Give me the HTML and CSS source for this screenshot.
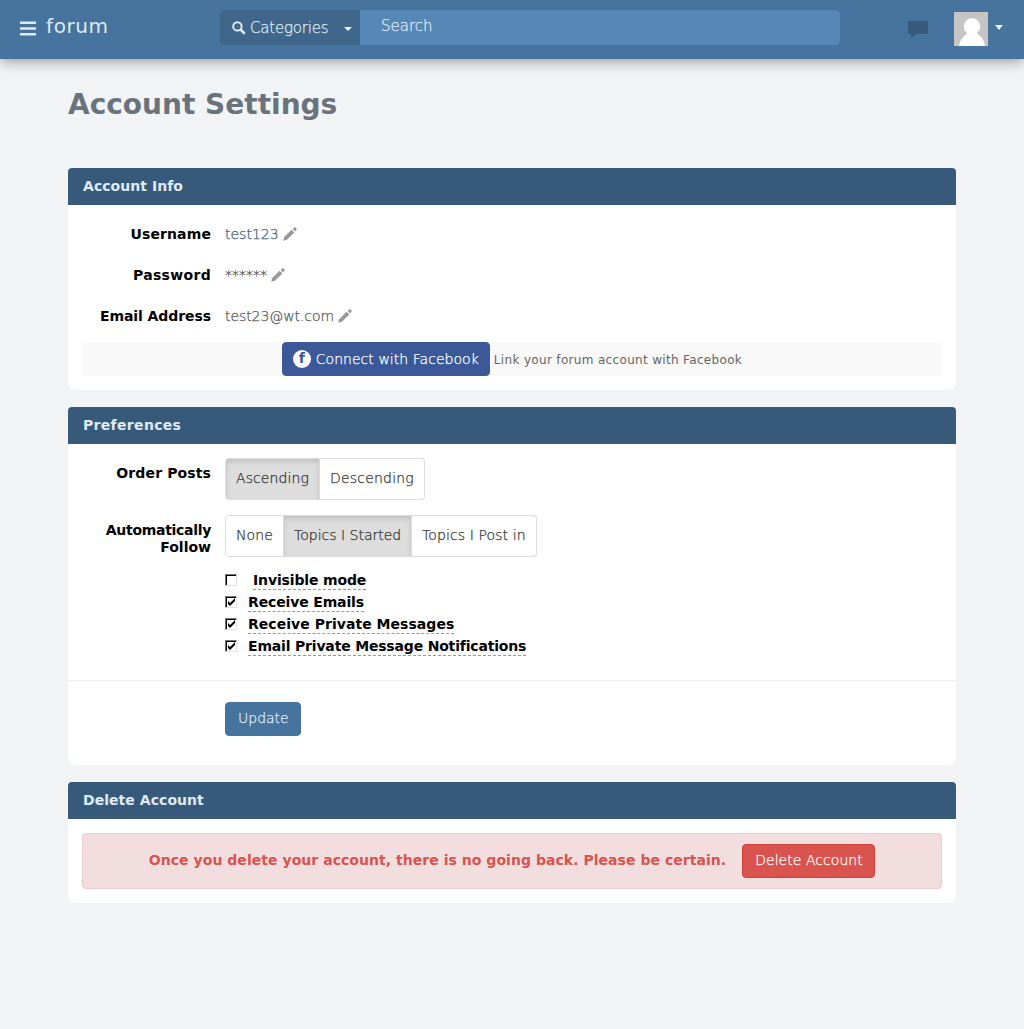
FILE: index.html
```html
<!DOCTYPE html>
<html lang="en">
<head>
<meta charset="utf-8">
<title>Account Settings</title>
<link rel="stylesheet" href="styles.css">
</head>
<body>
<svg class="defs" width="0" height="0">
  <symbol id="pencil" viewBox="0 0 14 14"><path d="M0.3 13.7 L1.2 10.1 L8.6 2.7 L11.4 5.4 L3.9 12.800 Z M9.6 1.900 L11.2 0.500 Q12 0 12.7 0.600 L13.5 1.400 Q14 2.1 13.5 2.800 L12.2 4.500 Z"/></symbol>
</svg>
<header class="navbar">
  <a class="brand">
    <svg class="menu-icon" width="17" height="15" viewBox="0 0 17 15"><path d="M0 0.5h16v2.6H0zM0 6.2h16v2.6H0zM0 11.9h16v2.6H0z"/></svg>
    <span>forum</span>
  </a>
  <form class="search">
    <div class="categories">
      <svg class="glass" width="14" height="14" viewBox="0 0 14 14"><circle cx="5.4" cy="5.4" r="4.2" fill="none" stroke-width="2"/><path d="M8.7 8.7 L12 12" stroke-width="2.6" stroke-linecap="round"/></svg>
      <span class="categories-text">Categories</span>
      <i class="caret"></i>
    </div>
    <div class="search-field">Search</div>
  </form>
  <div class="user">
    <svg class="chat" width="20" height="18" viewBox="0 0 20 18"><path d="M1 0h18q1 0 1 1v11q0 1-1 1H8L3.200 17.800V13H1q-1 0-1-1V1q0-1 1-1z"/></svg>
    <svg class="avatar" width="34" height="34" viewBox="0 0 34 34"><path fill="#c5c5c5" d="M0 0h34v34H0z"/><circle cx="18" cy="14.500" r="8.300" fill="#fff"/><path fill="#fff" d="M5 34C6 27 10.500 23 14 21h8c4 2 8 6 9 13z"/></svg>
    <i class="caret caret-large"></i>
  </div>
</header>
<main class="page">
  <h1>Account Settings</h1>
  <section class="panel">
    <h2>Account Info</h2>
    <div class="panel-body info">
      <div class="info-row"><b class="label">Username</b><span class="value link">test123</span><svg class="pencil"><use href="#pencil"/></svg></div>
      <div class="info-row"><b class="label open">Password</b><span class="value">******</span><svg class="pencil"><use href="#pencil"/></svg></div>
      <div class="info-row"><b class="label tight">Email Address</b><span class="value email">test23@wt.com</span><svg class="pencil"><use href="#pencil"/></svg></div>
      <div class="facebook">
        <button class="btn btn-facebook"><span class="fb-icon">f</span><span>Connect with Facebook</span></button>
        <small>Link your forum account with Facebook</small>
      </div>
    </div>
  </section>
  <section class="panel">
    <h2 class="open">Preferences</h2>
    <div class="preferences">
      <div class="pref-row">
        <b class="label">Order Posts</b>
        <div class="group"><span class="on w-asc">Ascending</span><span class="w-desc">Descending</span></div>
      </div>
      <div class="pref-row">
        <b class="label tighter">Automatically <span class="open">Follow</span></b>
        <div class="group"><span class="w-none">None</span><span class="on w-started">Topics I Started</span><span class="w-post">Topics I Post in</span></div>
      </div>
      <div class="checks">
        <div class="check"><i class="box"></i><b class="spaced">Invisible mode</b></div>
        <div class="check"><i class="box"><svg viewBox="0 0 9 9"><path d="M1 3v3l2 2 5-5V0L3 5z"/></svg></i><b>Receive Emails</b></div>
        <div class="check"><i class="box"><svg viewBox="0 0 9 9"><path d="M1 3v3l2 2 5-5V0L3 5z"/></svg></i><b class="messages">Receive Private Messages</b></div>
        <div class="check"><i class="box"><svg viewBox="0 0 9 9"><path d="M1 3v3l2 2 5-5V0L3 5z"/></svg></i><b class="notifications">Email Private Message Notifications</b></div>
      </div>
    </div>
    <div class="panel-footer"><button class="btn btn-update">Update</button></div>
  </section>
  <section class="panel">
    <h2>Delete Account</h2>
    <div class="panel-body">
      <div class="alert"><b>Once you delete your account, there is no going back. Please be certain.</b><button class="btn btn-danger">Delete Account</button></div>
    </div>
  </section>
</main>
</body>
</html>
```
FILE: styles.css
```css
* { box-sizing: border-box; }
body {
  margin: 0;
  background: #f1f3f5;
  font-family: "DejaVu Sans", sans-serif;
  font-size: 14px;
  font-weight: 200;
  line-height: 20px;
  color: #555;
}
.defs { display: block; }
.navbar {
  display: flex;
  height: 59px;
  background: #46749e;
  box-shadow: 0 0 15px rgba(0, 0, 0, 0.5);
  color: #dfeaf4;
}
.brand { display: flex; width: 220px; padding: 11px 0 0 20px; font-size: 20px; font-weight: 400; line-height: 30px; letter-spacing: 0.6px; }
.menu-icon { margin: 10px 9px 0 0; fill: #dfeaf4; }
.search { display: flex; width: 620px; height: 35px; margin-top: 10px; border-radius: 5px; overflow: hidden; font-size: 15px; }
.search, .value, .btn, .group { -webkit-text-stroke: 0.25px currentColor; }
.categories { display: flex; align-items: center; width: 140px; padding: 1px 8px 0 12px; background: #40668b; }
.categories-text { letter-spacing: -0.2px; }
.glass { margin-right: 4px; stroke: #dfeaf4; }
.caret { margin: 2px 0 0 auto; border: 4px solid transparent; border-top-color: #eef5fb; border-bottom: 0; }
.search-field { flex: 1; padding: 6px 21px; background: #5687b6; }
.user { display: flex; flex: 1; padding: 12px 20px 0 68px; }
.chat { margin: 9px 26px 0 0; fill: #375a7b; }
.caret-large { margin: 13px 0 0 7px; height: 5px; border-width: 5px 4.500px 0; }
.page { width: 888px; margin: 0 auto; }
h1 { margin: 0; padding: 26px 0 44px; font-size: 28px; line-height: 39px; font-weight: 700; color: #6a727c; }
.panel { margin-bottom: 17px; background: #fff; border-radius: 4px 4px 8px 8px; }
h2 { height: 37px; margin: 0; padding: 0 15px; border-radius: 4px 4px 0 0; background: #375a7b; color: #dfeaf4; font-size: 14px; line-height: 37px; font-weight: 700; letter-spacing: 0.05px; }
.panel-body { padding: 14px; }
.info-row { display: flex; height: 41px; padding-top: 5px; }
.label { width: 129px; margin-right: 14px; text-align: right; color: #000; font-weight: 700; letter-spacing: 0.12px; }
.open { letter-spacing: 0.32px; }
.tight { letter-spacing: -0.08px; }
.tighter { letter-spacing: -0.3px; }
.tighter .open { letter-spacing: 0; }
.link { color: #375a7b; }
.email { letter-spacing: -0.08px; }
.pencil { width: 14px; height: 14px; margin: 3px 0 0 4px; fill: #999; }
.facebook { display: flex; justify-content: center; align-items: center; height: 34px; background: #f9f9f9; }
.btn { height: 34px; padding: 0 12px; border: 1px solid; border-radius: 4px; font: inherit; color: #fff; white-space: nowrap; }
.btn-facebook { display: flex; align-items: center; width: 208px; margin-right: 4px; padding: 0 10px; background: #3b5998; border-color: #3b5998; letter-spacing: 0.04px; }
.fb-icon { width: 18px; height: 18px; margin-right: 5px; border-radius: 50%; background: #fff; color: #3b5998; font-weight: 700; line-height: 16px; -webkit-text-stroke: 0; }
small { padding-top: 1px; font-size: 12px; font-weight: 400; color: #666; letter-spacing: 0.33px; }
.preferences { display: grid; gap: 15px; padding: 14px 14px 23px; }
.pref-row { display: flex; height: 42px; }
.preferences .label { padding-top: 7px; line-height: 17px; }
.group { display: flex; }
.group span { padding: 0 0 0 10px; border: 1px solid #ddd; border-left-width: 0; line-height: 39px; color: #333; white-space: nowrap; letter-spacing: 0.1px; }
.group span:first-child { border-left-width: 1px; border-radius: 4px 0 0 4px; }
.group span:last-child { border-radius: 0 4px 4px 0; }
.group .on { background: #ddd; box-shadow: inset 0 3px 5px rgba(0, 0, 0, 0.125); }
.w-asc { width: 95px; }
.group .w-desc { width: 105px; letter-spacing: 0.2px; }
.w-none { width: 59px; }
.group .w-started { width: 128px; letter-spacing: 0; }
.w-post { width: 125px; }
.checks { margin: -3px 0 0 143px; }
.check { display: flex; height: 22px; color: #000; }
.check b { padding-top: 1px; line-height: 20px; height: 21px; font-weight: 700; margin-left: 11px; border-bottom: 1px dashed #999; letter-spacing: -0.14px; }
.check .spaced { margin-left: 16px; }
.check .messages { letter-spacing: 0.04px; }
.check .notifications { letter-spacing: -0.18px; }
.box { width: 12px; height: 12px; margin-top: 5px; border: 1px solid; border-color: #777 #e5e2dd #e5e2dd #777; box-shadow: inset 1px 1px #000; }
.box svg { display: block; width: 9px; height: 9px; margin: 1px 0 0 1px; }
.panel-footer { height: 85px; padding: 21px 0 0 157px; border-top: 1px solid #eee; }
.btn-update { width: 76px; padding-bottom: 2px; background: #46749e; border-color: #46749e; color: #dfeaf4; }
.alert { display: flex; justify-content: center; align-items: center; gap: 16px; height: 56px; background: #f2dede; border: 1px solid #ebccd1; border-radius: 4px; color: #d9534f; }
.alert b { padding-bottom: 2px; font-weight: 700; letter-spacing: 0.04px; }
.btn-danger { width: 133px; padding-bottom: 2px; background: #d9534f; border-color: #d43f3a; letter-spacing: 0.05px; }
```
